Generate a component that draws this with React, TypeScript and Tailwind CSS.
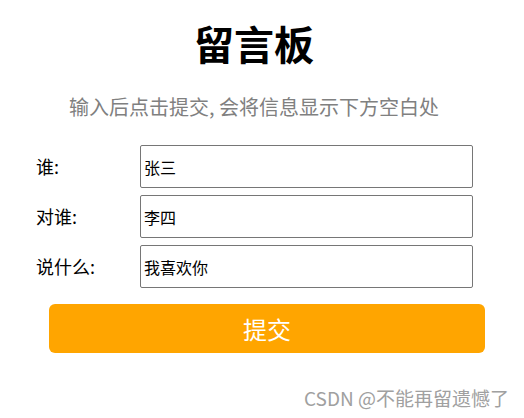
import React from 'react';

const font = '[font-family:"Noto_Sans_CJK_SC","Noto_Sans",sans-serif]';

const rows = [
  { label: '谁:', value: '张三' },
  { label: '对谁:', value: '李四' },
  { label: '说什么:', value: '我喜欢你' },
];

export default function App() {
  return (
    <div className={`w-[524px] h-[418px] bg-white relative ${font}`}>
      {/* Header */}
      <div className="pr-[16px]">
        <h1 className="pt-[17px] text-center text-[40px] leading-[52px] font-bold text-black">留言板</h1>
        <p className="mt-[24px] text-center text-[20px] leading-[28px] text-[#808080]">
          输入后点击提交, 会将信息显示下方空白处
        </p>
      </div>

      {/* Form */}
      <div className="mt-[24px] flex flex-col gap-[7px] pl-[36px]">
        {rows.map((r) => (
          <div key={r.label} className="flex items-center">
            <label className="w-[104px] text-[18px] text-black">{r.label}</label>
            <input
              defaultValue={r.value}
              className="w-[333px] h-[43px] border border-[#767676] rounded-[2px] px-[3px] text-[16px] text-black outline-none"
            />
          </div>
        ))}
      </div>

      <button className="ml-[49px] mt-[16px] w-[436px] h-[49px] rounded-[6px] bg-[#ffa500] text-white text-[24px]">
        提交
      </button>

      {/* Watermark */}
      <div className="absolute right-[15px] bottom-[6px] text-[19px] text-[#a0a0a0]">CSDN @不能再留遗憾了</div>
    </div>
  );
}
